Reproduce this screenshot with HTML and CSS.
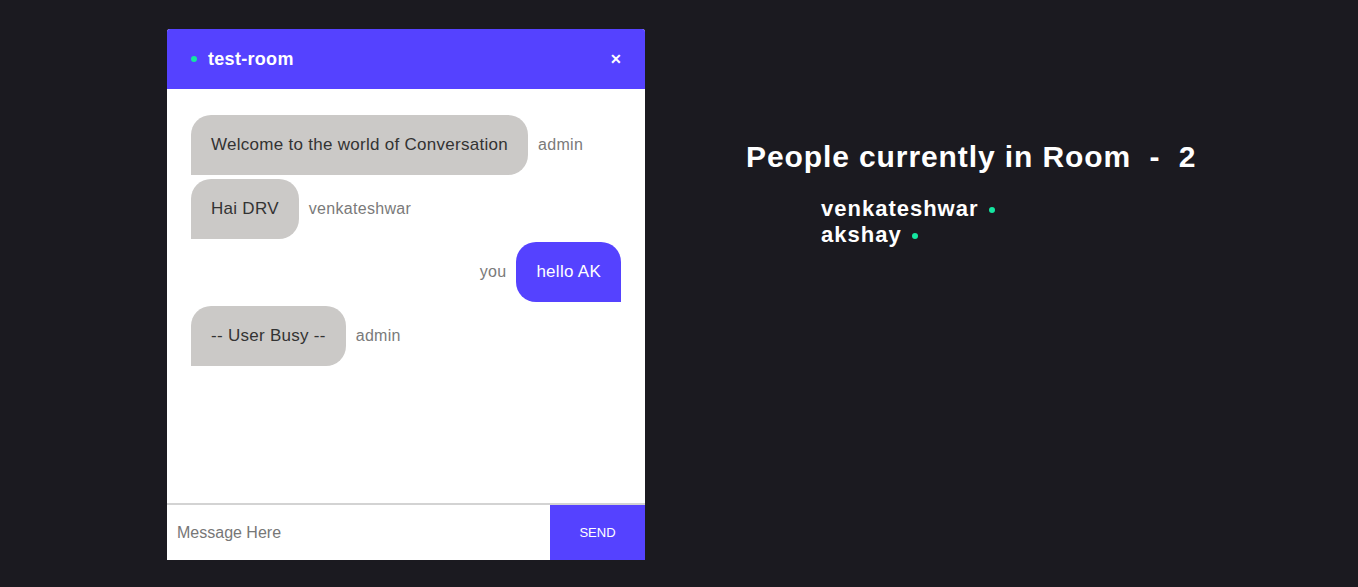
FILE: index.html
```html
<!DOCTYPE html>
<html>
<head>
<meta charset="utf-8">
<link rel="stylesheet" href="styles.css">
</head>
<body>
<div class="page">
  <div class="chat">
    <div class="chat-header">
      <span class="dot"></span>
      <span class="room">test-room</span>
      <span class="close">&#x2715;</span>
    </div>
    <div class="chat-body">
      <div class="msg">
        <div class="bubble">Welcome to the world of Conversation</div>
        <span class="who">admin</span>
      </div>
      <div class="msg">
        <div class="bubble">Hai DRV</div>
        <span class="who">venkateshwar</span>
      </div>
      <div class="msg mine">
        <div class="bubble">hello AK</div>
        <span class="who">you</span>
      </div>
      <div class="msg">
        <div class="bubble">-- User Busy --</div>
        <span class="who">admin</span>
      </div>
    </div>
    <div class="chat-input">
      <input class="field" type="text" placeholder="Message Here">
      <button class="send">SEND</button>
    </div>
  </div>
  <div class="people">
    <h1 class="title">People currently in Room &nbsp;-&nbsp; 2</h1>
    <ul class="list">
      <li>venkateshwar <span class="dot"></span></li>
      <li>akshay <span class="dot"></span></li>
    </ul>
  </div>
</div>
</body>
</html>
```

FILE: styles.css
```css
html, body {
  margin: 0;
  padding: 0;
  background: #1b1a20;
  font-family: "Liberation Sans", Arial, sans-serif;
}
.page {
  display: flex;
  align-items: flex-start;
  padding: 29px 0 0 167px;
}
.chat {
  width: 478px;
  height: 531px;
  display: flex;
  flex-direction: column;
  background: #fff;
  border-radius: 3px 3px 0 0;
  overflow: hidden;
}
.chat-header {
  height: 60px;
  flex: none;
  background: #5542ff;
  display: flex;
  align-items: center;
  padding: 0 23px 0 24px;
  color: #fff;
}
.dot {
  display: inline-block;
  width: 6px;
  height: 6px;
  border-radius: 50%;
  background: #14e6a0;
}
.room {
  margin-left: 11px;
  font-weight: bold;
  font-size: 18px;
  letter-spacing: 0.3px;
}
.close {
  margin-left: auto;
  font-size: 14px;
  font-weight: bold;
}
.chat-body {
  flex: 1;
  padding: 26px 24px 0 24px;
  display: flex;
  flex-direction: column;
  gap: 3.5px;
}
.msg {
  display: flex;
  align-items: center;
  gap: 10px;
}
.msg.mine {
  flex-direction: row-reverse;
}
.bubble {
  background: #cbc9c7;
  color: #333;
  font-size: 17px;
  letter-spacing: 0.28px;
  line-height: 20px;
  padding: 20px;
  border-radius: 20px 20px 20px 0;
}
.mine .bubble {
  background: #5542ff;
  color: #fff;
  border-radius: 20px 20px 0 20px;
}
.who {
  color: #7a7a7a;
  font-size: 16px;
  letter-spacing: 0.3px;
}
.chat-input {
  flex: none;
  height: 55px;
  border-top: 2px solid #d3d3d3;
  display: flex;
}
.field {
  flex: 1;
  border: none;
  outline: none;
  padding: 0 10px;
  font-family: "Liberation Sans", Arial, sans-serif;
  font-size: 16px;
  color: #333;
}
.field::placeholder {
  color: #777;
}
.send {
  width: 95px;
  border: none;
  background: #5542ff;
  color: #fff;
  font-family: "Liberation Sans", Arial, sans-serif;
  font-size: 13px;
  padding: 0;
}
.people {
  margin-left: 101px;
  margin-top: 111px;
  color: #fff;
}
.title {
  margin: 0;
  font-size: 30px;
  letter-spacing: 0.9px;
  font-weight: bold;
  line-height: 33px;
}
.list {
  list-style: none;
  margin: 23px 0 0 75px;
  padding: 0;
  font-size: 22px;
  letter-spacing: 1px;
  font-weight: bold;
  line-height: 26px;
}
.list .dot {
  vertical-align: middle;
  margin-left: 3px;
}
```
